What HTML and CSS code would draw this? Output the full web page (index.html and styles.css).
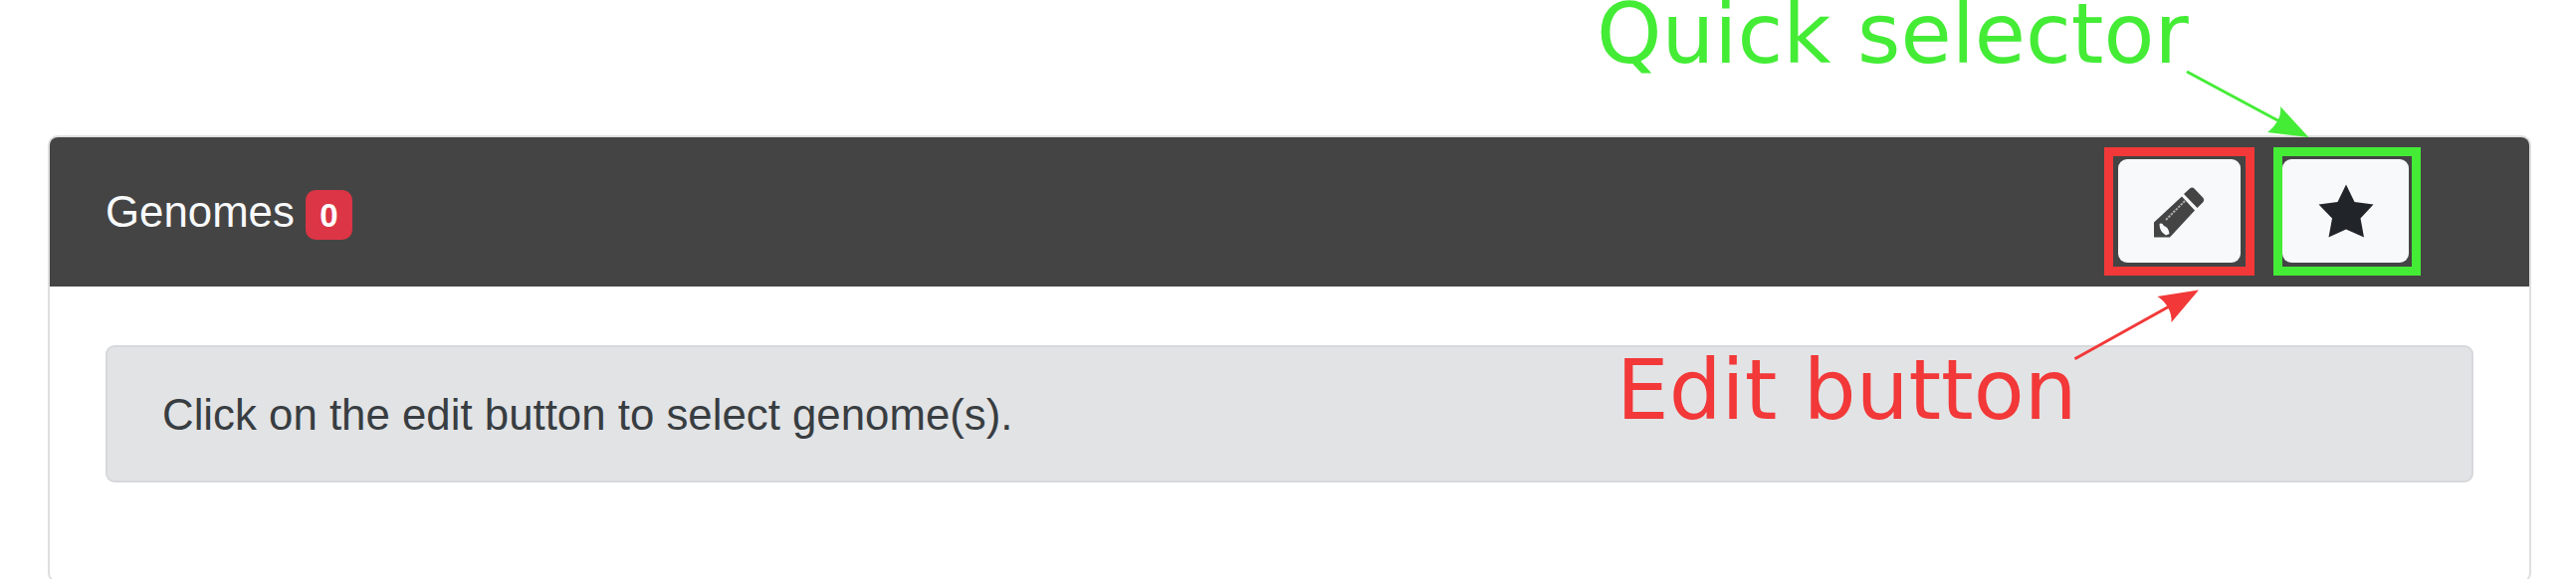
FILE: index.html
```html
<!DOCTYPE html>
<html lang="en">
<head>
<meta charset="utf-8">
<title>Genomes</title>
<link rel="stylesheet" href="styles.css">
</head>
<body>
<main class="page">
  <section class="card">
    <header class="card-header">
      <div class="title">Genomes <span class="badge">0</span></div>
      <div class="actions">
        <button class="btn btn-edit" aria-label="Edit">
          <svg class="icon" viewBox="0 0 54 54">
            <path d="M1 38.500 29 12.500 42 26.500 17 53.500H1Z"/>
            <path d="M31 10 37 4.500Q39 2.500 41.500 4.500L50.500 14Q52 16 50.500 18L44.500 24Z"/>
            <path class="shine" d="M13 36 32 17"/>
            <path class="tip" d="M6.500 40Q9 38.500 11 42Q15.500 43 16.500 50L13 51.500Q6.500 48 6.500 40Z"/>
          </svg>
        </button>
        <button class="btn btn-star" aria-label="Quick select">
          <svg class="icon" viewBox="0 0 54 54">
            <path d="M27 0.500 35.500 18 54.500 20.500 41.500 34.500 45 53.500 27 45.500 9.500 53.500 13 34.500 -0.500 20.500 18.500 18Z"/>
          </svg>
        </button>
      </div>
    </header>
    <div class="card-body">
      <div class="alert">Click on the edit button to select genome(s).</div>
    </div>
  </section>
  <div class="frame frame-edit"></div>
  <div class="frame frame-star"></div>
  <div class="note note-star">Quick selector</div>
  <div class="note note-edit">Edit button</div>
  <svg class="arrows" viewBox="0 0 2588 582">
    <g class="arrow-star">
      <path class="shaft" d="M2197 72 2292 123"/>
      <path d="M2319.500 138 2291 107Q2292 115 2288.500 121Q2284 129 2278 133Z"/>
    </g>
    <g class="arrow-edit">
      <path class="shaft" d="M2084.500 360.700 2182 306.500"/>
      <path d="M2209 291.500 2167.500 298Q2174 302 2178 309Q2182 316 2181.500 324Z"/>
    </g>
  </svg>
</main>
</body>
</html>
```
FILE: styles.css
```css
* { box-sizing: border-box; }
body { margin: 0; background: #fff; font-family: "Liberation Sans", Arial, sans-serif; }
.page { position: relative; height: 582px; padding: 136px 45px 0 48px; overflow: hidden; }
.card { height: 450px; border: 2px solid #dfdfdf; border-radius: 10px; background: #fff; }
.card-header {
  display: flex; align-items: center; justify-content: space-between;
  height: 150px; padding: 0 121px 0 56px;
  background: #444; color: #f8f9fa; border-radius: 8px 8px 0 0;
  font-size: 43.800px;
}
.title { display: flex; align-items: center; gap: 11px; line-height: 50px; }
.badge {
  width: 47px; height: 50px; margin-top: 5px; border-radius: 10px; background: #dc3545; color: #fff;
  font-size: 33px; font-weight: 700; line-height: 51px; text-align: center;
}
.actions { display: flex; gap: 42px; margin-top: -3px; }
.btn {
  display: flex; align-items: center; justify-content: center;
  height: 104px; padding: 0; border: 0; border-radius: 9px; background: #f8f9fa;
}
.btn-edit { width: 123px; color: #444; }
.btn-star { width: 127px; color: #212529; }
.icon { width: 54px; height: 54px; fill: currentColor; overflow: visible; }
.shine { fill: none; stroke: #aaa; stroke-width: 2; stroke-dasharray: 2.500 1; }
.tip { fill: #f8f9fa; }
.card-body { padding: 59px 56px 0; }
.alert {
  height: 138px; padding: 0 55px; border: 2px solid #d6d8db; border-radius: 9px;
  background: #e2e3e5; color: #383d41; font-size: 43.800px; line-height: 135px;
}
.frame { position: absolute; top: 148px; height: 129px; border: 9.500px solid #f23838; }
.frame-edit { left: 2114px; width: 151px; }
.frame-star { left: 2284px; width: 148px; border-color: #44ec36; }
.note { position: absolute; font-family: "DejaVu Sans", sans-serif; font-size: 83.300px; line-height: 98px; white-space: nowrap; }
.note-star { left: 1604px; top: -14px; color: #44ec36; }
.note-edit { left: 1624px; top: 344px; color: #f23838; }
.arrows { position: absolute; left: 0; top: 0; width: 2588px; height: 582px; }
.arrow-star { fill: #44ec36; stroke: #44ec36; }
.arrow-edit { fill: #f23838; stroke: #f23838; }
.arrows path { stroke-width: 0; }
.arrows .shaft { stroke-width: 3; }
```
